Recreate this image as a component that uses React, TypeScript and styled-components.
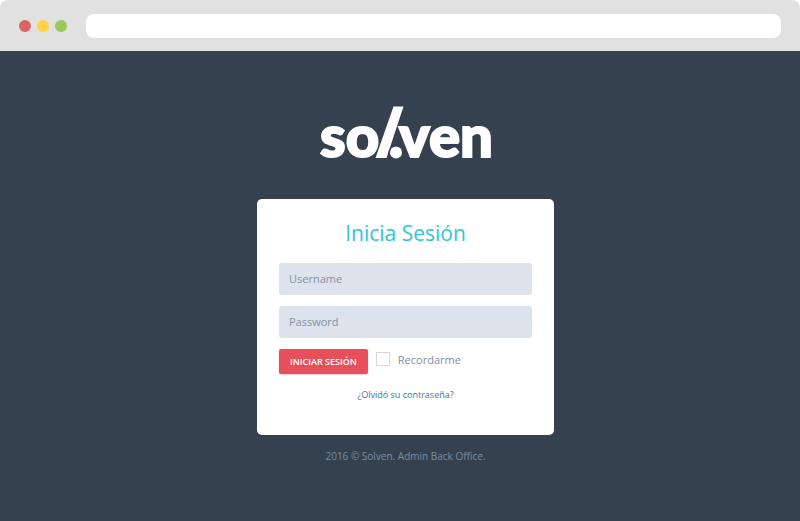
import React from "react";
import styled, { createGlobalStyle } from "styled-components";

const GlobalStyle = createGlobalStyle`
  *, *::before, *::after { box-sizing: border-box; }
  body {
    margin: 0;
    background: #fff;
    font-family: "Open Sans", "Noto Sans", sans-serif;
  }
`;

const Window = styled.div`
  display: flex;
  flex-direction: column;
  min-height: 100vh;
`;

const BrowserBar = styled.header`
  display: flex;
  align-items: center;
  gap: 19px;
  height: 51px;
  padding: 1px 19px 0;
  background: #e1e1e1;
  border-radius: 8px 8px 0 0;
`;

const Lights = styled.div`
  display: flex;
  gap: 6px;
`;

const Light = styled.span<{ $color: string }>`
  width: 12px;
  height: 12px;
  border-radius: 50%;
  background: ${({ $color }) => $color};
`;

const AddressInput = styled.input`
  flex: 1;
  min-width: 0;
  height: 24px;
  padding: 0 10px;
  border: 0;
  border-radius: 8px;
  background: #fff;
  font: 12px "Open Sans", sans-serif;
`;

const Page = styled.main`
  flex: 1;
  display: flex;
  flex-direction: column;
  align-items: center;
  padding: 42px 0 52px 11px;
  background: #364150;
`;

const Logo = styled.svg`
  display: block;
  width: 192px;
  height: 84px;
  fill: #fff;
  font: 900 58px Lato, "Open Sans", sans-serif;
`;

const LogoText = styled.text`
  stroke: #fff;
  stroke-width: 2px;
`;

const Card = styled.form`
  width: 297px;
  max-width: 100%;
  margin-top: 22px;
  padding: 19px 22px 32px;
  border-radius: 5px;
  background: #fff;
`;

const Title = styled.h1`
  margin: 0 0 14px;
  color: #32c5d2;
  font-size: 21px;
  font-weight: 400;
  line-height: 31px;
  text-align: center;
`;

const Field = styled.input`
  display: block;
  width: 100%;
  height: 32px;
  margin-bottom: 11px;
  padding: 0 10px 2px;
  border: 0;
  border-radius: 3px;
  background: #dde3ec;
  color: #8290a3;
  font: 11px "Open Sans", sans-serif;
  &::placeholder { color: #8290a3; opacity: 1; }
`;

const Actions = styled.div`
  display: flex;
  align-items: flex-start;
  gap: 8px;
`;

const SubmitButton = styled.button`
  height: 25px;
  padding: 0 11px;
  border: 0;
  border-radius: 2px;
  background: #e7505a;
  color: #fff;
  font: 600 9px "Open Sans", sans-serif;
  text-transform: uppercase;
  box-shadow: 0 1px 2px rgba(0, 0, 0, 0.2);
  cursor: pointer;
`;

const Remember = styled.label`
  display: flex;
  align-items: center;
  gap: 8px;
  height: 20px;
  color: #8290a3;
  font-size: 11px;
`;

const Checkbox = styled.input`
  appearance: none;
  width: 14px;
  height: 14px;
  margin: 0;
  border: 1px solid #d9d9d9;
  background: #fff;
  &:checked { background: #8290a3; }
`;

const ForgotLink = styled.a`
  display: block;
  margin-top: 13px;
  color: #337ab7;
  font-size: 9px;
  line-height: 16px;
  text-align: center;
  text-decoration: none;
`;

const Copyright = styled.footer`
  margin-top: 13px;
  color: #7a8ca5;
  font-size: 10px;
  line-height: 16px;
`;

export default function App() {
  return (
    <Window>
      <GlobalStyle />
      <BrowserBar>
        <Lights>
          <Light $color="#d86464" />
          <Light $color="#ffd248" />
          <Light $color="#9dc75b" />
        </Lights>
        <AddressInput type="text" aria-label="Address" />
      </BrowserBar>
      <Page>
        <Logo viewBox="-10 -10 192 84" role="img" aria-label="Solven">
          <LogoText x="0" y="54">so</LogoText>
          <path d="M73.500 3.500H83.500L66.500 55H55.500Z" stroke="#364150" strokeWidth="2" paintOrder="stroke" />
          <LogoText x="79" y="54">ven</LogoText>
          <circle cx="76" cy="49.500" r="6" stroke="#364150" strokeWidth="3" paintOrder="stroke" />
        </Logo>
        <Card onSubmit={(event) => event.preventDefault()}>
          <Title>Inicia Sesión</Title>
          <Field type="text" placeholder="Username" aria-label="Username" />
          <Field type="password" placeholder="Password" aria-label="Password" />
          <Actions>
            <SubmitButton type="submit">Iniciar sesión</SubmitButton>
            <Remember>
              <Checkbox type="checkbox" />
              Recordarme
            </Remember>
          </Actions>
          <ForgotLink href="#recuperar">¿Olvidó su contraseña?</ForgotLink>
        </Card>
        <Copyright>2016 © Solven. Admin Back Office.</Copyright>
      </Page>
    </Window>
  );
}
